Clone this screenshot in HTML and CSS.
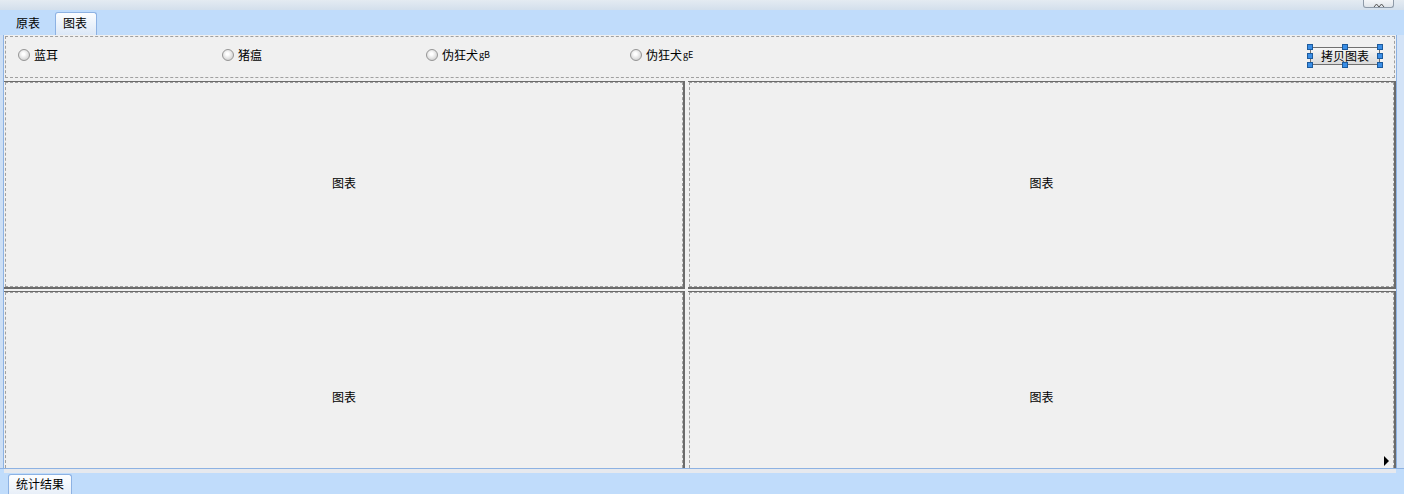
FILE: index.html
```html
<!DOCTYPE html>
<html lang="zh-CN">
<head>
    <meta charset="UTF-8">
    <title>统计结果</title>
    <link rel="stylesheet" href="styles.css">
</head>
<body>
    <div class="window">
        <div class="top-strip">
            <div class="collapse-btn">
                <svg width="12" height="6" viewBox="0 0 12 6">
                    <path d="M1 6 L3.5 3 L6 6 M6 6 L8.5 3 L11 6" fill="none" stroke="#555" stroke-width="1"/>
                </svg>
            </div>
        </div>
        <div class="tab-bar">
            <div class="tab">原表</div>
            <div class="tab tab-active">图表</div>
        </div>
        <div class="middle">
            <div class="left-edge"></div>
            <div class="content">
                <div class="radio-panel">
                    <label class="radio"><span class="dot"></span>蓝耳</label>
                    <label class="radio"><span class="dot"></span>猪瘟</label>
                    <label class="radio"><span class="dot"></span>伪狂犬 <span class="small">gB</span></label>
                    <label class="radio"><span class="dot"></span>伪狂犬 <span class="small">gE</span></label>
                    <div class="copy-wrap">
                        <button class="copy-btn">拷贝图表</button>
                        <span class="handle h1"></span><span class="handle h2"></span><span class="handle h3"></span>
                        <span class="handle h4"></span><span class="handle h5"></span>
                        <span class="handle h6"></span><span class="handle h7"></span><span class="handle h8"></span>
                    </div>
                </div>
                <div class="charts">
                    <div class="chart"><div class="chart-inner">图表</div></div>
                    <div class="chart"><div class="chart-inner">图表</div></div>
                    <div class="chart chart-low"><div class="chart-inner">图表</div></div>
                    <div class="chart chart-low"><div class="chart-inner">图表<span class="arrow"></span></div></div>
                </div>
            </div>
            <div class="right-edge"></div>
        </div>
        <div class="bottom-bar">
            <div class="scroll-strip"></div>
            <div class="bottom-tabs">
                <div class="tab tab-bottom">统计结果</div>
            </div>
        </div>
    </div>
</body>
</html>
```

FILE: styles.css
```css
* {
    margin: 0;
    padding: 0;
    box-sizing: border-box;
}
body {
    width: 1404px;
    height: 494px;
    overflow: hidden;
    font-family: "Noto Sans CJK SC", "DejaVu Sans", sans-serif;
    font-size: 12px;
    line-height: 14px;
    color: #000;
    background: #c0dcfb;
}
.window {
    display: flex;
    flex-direction: column;
    height: 494px;
}
.top-strip {
    height: 10px;
    background: linear-gradient(#e4ebf2, #d3dfec);
    display: flex;
    justify-content: flex-end;
    padding-right: 10px;
}
.collapse-btn {
    width: 31px;
    height: 8px;
    border: 1px solid #8e9aa8;
    border-top: none;
    border-radius: 0 0 3px 3px;
    background: linear-gradient(#f4f6f8, #dfe4ea);
    display: flex;
    justify-content: center;
    align-items: flex-end;
}
.collapse-btn svg {
    display: block;
}
.tab-bar {
    height: 25px;
    background: #c0dcfb;
    display: flex;
    align-items: flex-end;
    padding-left: 8px;
    gap: 7px;
}
.tab {
    height: 23px;
    line-height: 20px;
    padding: 0 7px;
    border: 1px solid transparent;
    border-bottom: none;
    border-radius: 3px 3px 0 0;
}
.tab-active {
    width: 42px;
    border-color: #8db2e3;
    background: linear-gradient(#fbfdff, #dce8f7);
}
.middle {
    display: flex;
    height: 433px;
}
.left-edge {
    width: 4px;
    background: #cddff5;
    border-right: 1px solid #8db2e3;
}
.content {
    flex: 1;
    background: #f0f0f0;
    display: flex;
    flex-direction: column;
    overflow: hidden;
    border-right: 1px solid #8db2e3;
}
.right-edge {
    width: 7px;
    background: #d3e3f7;
}
.radio-panel {
    height: 42px;
    margin: 1px 1px 0 1px;
    border: 1px dashed #a0a0a0;
    display: flex;
    align-items: center;
    padding-left: 12px;
    padding-bottom: 4px;
}
.radio {
    width: 204px;
    display: flex;
    align-items: center;
    gap: 4px;
}
.dot {
    width: 12px;
    height: 12px;
    border-radius: 50%;
    border: 1px solid #959595;
    background: radial-gradient(circle at 45% 40%, #ffffff 15%, #d0d0d0 80%);
}
.small {
    font-size: 9px;
    margin-left: -3px;
}
.copy-wrap {
    margin-left: auto;
    margin-right: 11px;
    margin-top: 2px;
    position: relative;
    width: 76px;
    height: 24px;
    padding: 3px;
}
.copy-btn {
    display: block;
    width: 70px;
    height: 18px;
    padding: 0;
    line-height: 16px;
    border: 1px solid #707070;
    border-radius: 2px;
    background: linear-gradient(#f6f6f6, #dadada);
    font-family: inherit;
    font-size: 12px;
    color: #000;
}
.handle {
    position: absolute;
    width: 6px;
    height: 6px;
    background: #3a8ee6;
    border: 1px solid #1c5a9c;
}
.h1 { left: 0; top: 0; }
.h2 { left: 35px; top: 0; }
.h3 { right: 0; top: 0; }
.h4 { left: 0; top: 9px; }
.h5 { right: 0; top: 9px; }
.h6 { left: 0; bottom: 0; }
.h7 { left: 35px; bottom: 0; }
.h8 { right: 0; bottom: 0; }
.charts {
    margin-top: 3px;
    display: grid;
    grid-template-columns: 681px 1fr;
    grid-template-rows: 208px 1fr;
    column-gap: 3px;
    row-gap: 2px;
    flex: 1;
}
.chart {
    border-top: 1px solid #6b6b6b;
    border-right: 2px solid #6b6b6b;
    border-bottom: 2px solid #6b6b6b;
}
.chart-low {
    border-bottom: none;
}
.chart-inner {
    position: relative;
    height: 100%;
    margin-left: 1px;
    border: 1px dashed #a0a0a0;
    display: flex;
    justify-content: center;
    align-items: center;
    padding-bottom: 4px;
}
.chart-low .chart-inner {
    border-bottom: none;
    padding-top: 32px;
    padding-bottom: 0;
}
.arrow {
    position: absolute;
    right: 4px;
    bottom: 2px;
    width: 0;
    height: 0;
    border-top: 5px solid transparent;
    border-bottom: 5px solid transparent;
    border-left: 5px solid #000;
}
.bottom-bar {
    flex: 1;
    border-top: 1px solid #8db2e3;
    display: flex;
    flex-direction: column;
}
.scroll-strip {
    height: 4px;
    background: #e6e9ee;
    margin: 0 8px 0 4px;
}
.bottom-tabs {
    flex: 1;
    display: flex;
    align-items: flex-end;
    padding-left: 8px;
}
.tab-bottom {
    height: 20px;
    line-height: 18px;
    border-color: #8db2e3;
    background: linear-gradient(#fdfeff, #e8eff8);
}
```
